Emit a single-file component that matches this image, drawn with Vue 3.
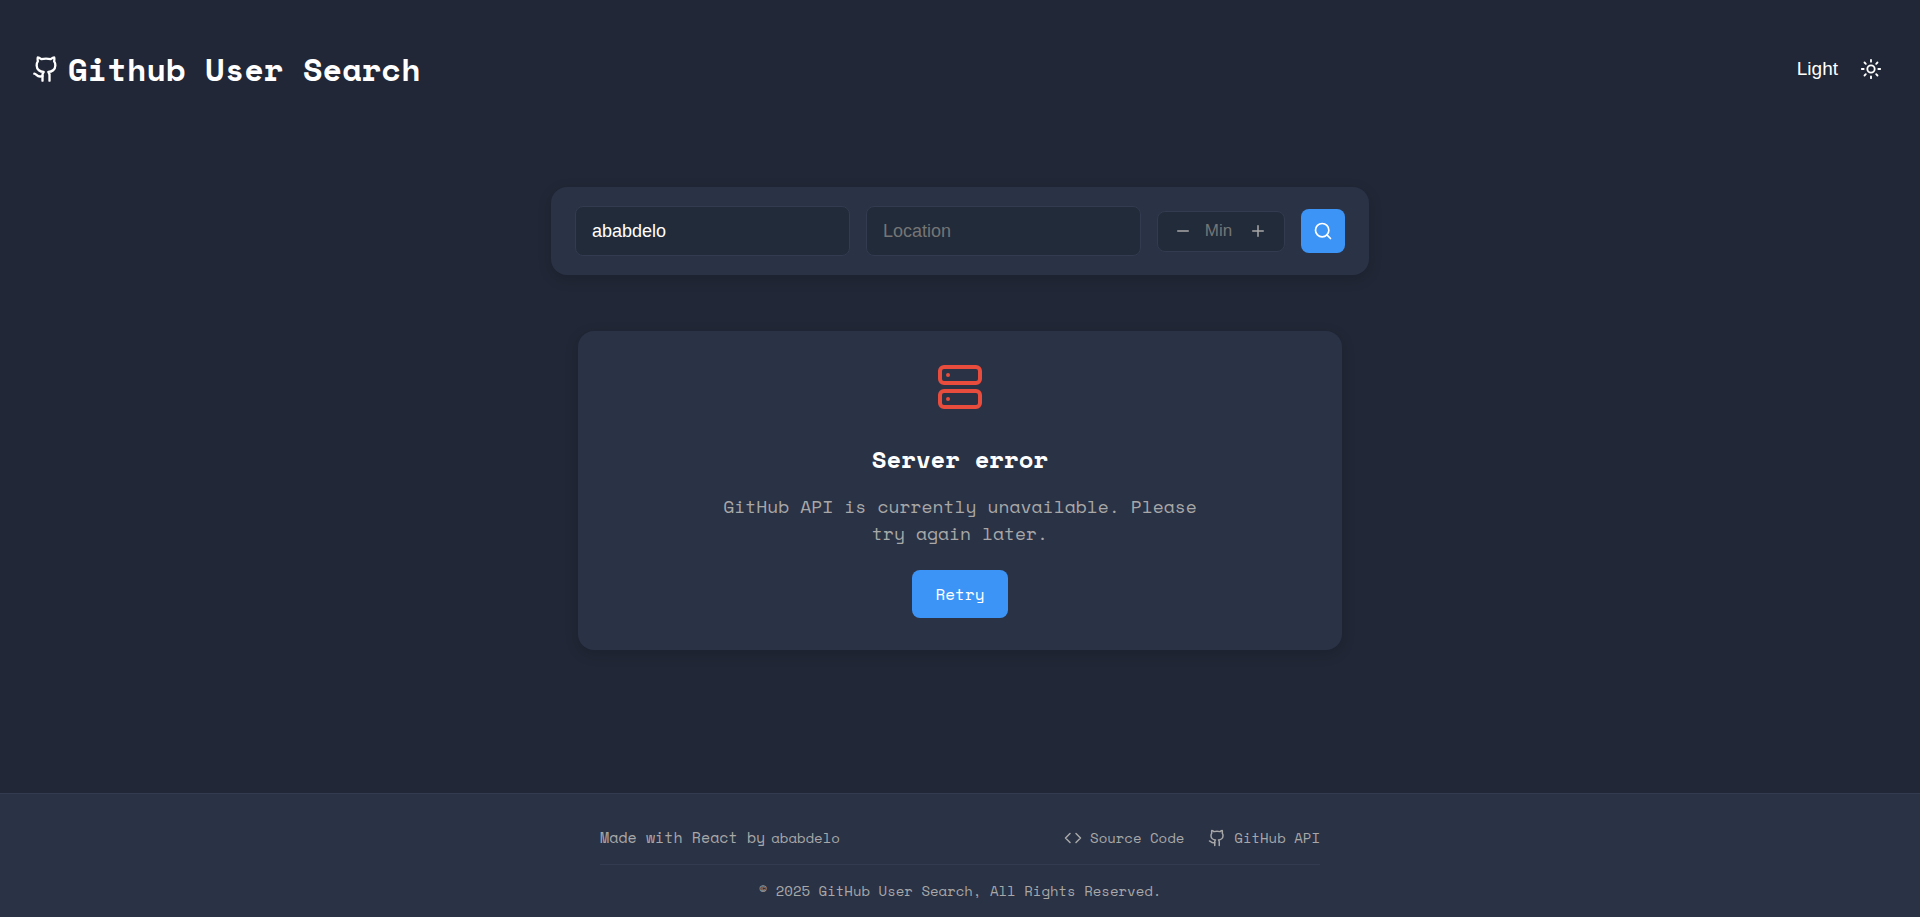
<script setup>
import { ref } from 'vue'

const username = ref('ababdelo')
const location = ref('')
const minRepos = ref('')

function step(delta) {
  minRepos.value = String(Math.max(0, Number(minRepos.value || 0) + delta))
}
</script>

<template>
  <div class="page">
    <header class="header">
      <h1 class="brand">
        <svg class="icon brand-icon" viewBox="0 0 24 24" aria-hidden="true">
          <path d="M15 22v-4a4.8 4.8 0 0 0-1-3.5c3 0 6-2 6-5.5.08-1.25-.27-2.48-1-3.5.28-1.15.28-2.35 0-3.5 0 0-1 0-3 1.5-2.64-.5-5.36-.5-8 0C6 2 5 2 5 2c-.3 1.15-.3 2.35 0 3.5A5.403 5.403 0 0 0 4 9c0 3.5 3 5.5 6 5.5-.39.49-.68 1.05-.85 1.65-.17.6-.22 1.23-.15 1.85v4" />
          <path d="M9 18c-4.51 2-5-2-7-2" />
        </svg>
        <span>Github User Search</span>
      </h1>
      <button class="theme" type="button">
        <span>Light</span>
        <svg class="icon sun" viewBox="0 0 24 24" aria-hidden="true">
          <circle cx="12" cy="12" r="4" />
          <path d="M12 2v2M12 20v2M4.93 4.93l1.41 1.41M17.66 17.66l1.41 1.41M2 12h2M20 12h2M6.34 17.66l-1.41 1.41M19.07 4.93l-1.41 1.41" />
        </svg>
      </button>
    </header>

    <main class="main">
      <form class="search" @submit.prevent>
        <input v-model="username" class="field" type="text" placeholder="Username" aria-label="Username" />
        <input v-model="location" class="field" type="text" placeholder="Location" aria-label="Location" />
        <div class="stepper">
          <button type="button" class="step" aria-label="Decrease minimum" @click="step(-1)">
            <svg class="icon" viewBox="0 0 24 24" aria-hidden="true"><path d="M5 12h14" /></svg>
          </button>
          <input v-model="minRepos" class="amount" type="text" inputmode="numeric" placeholder="Min" aria-label="Minimum repositories" />
          <button type="button" class="step" aria-label="Increase minimum" @click="step(1)">
            <svg class="icon" viewBox="0 0 24 24" aria-hidden="true"><path d="M12 5v14M5 12h14" /></svg>
          </button>
        </div>
        <button type="submit" class="submit" aria-label="Search">
          <svg class="icon" viewBox="0 0 24 24" aria-hidden="true">
            <circle cx="11" cy="11" r="8" /><path d="M21 21l-4.3-4.3" />
          </svg>
        </button>
      </form>

      <section class="error">
        <svg class="icon error-icon" viewBox="0 0 24 24" aria-hidden="true">
          <rect x="2" y="2" width="20" height="8" rx="2" />
          <rect x="2" y="14" width="20" height="8" rx="2" />
          <path d="M6 6h.01M6 18h.01" />
        </svg>
        <h2>Server error</h2>
        <p>GitHub API is currently unavailable. Please try again later.</p>
        <button type="button" class="retry">Retry</button>
      </section>
    </main>

    <footer class="footer">
      <div class="footer-inner">
        <div class="footer-row">
          <div class="credit">
            <span>Made with React by</span>
            <a href="#">ababdelo</a>
          </div>
          <nav class="links">
            <a href="#">
              <svg class="icon" viewBox="0 0 24 24" aria-hidden="true"><path d="M16 18l6-6-6-6M8 6l-6 6 6 6" /></svg>
              <span>Source Code</span>
            </a>
            <a href="#">
              <svg class="icon" viewBox="0 0 24 24" aria-hidden="true">
                <path d="M15 22v-4a4.8 4.8 0 0 0-1-3.5c3 0 6-2 6-5.5.08-1.25-.27-2.48-1-3.5.28-1.15.28-2.35 0-3.5 0 0-1 0-3 1.5-2.64-.5-5.36-.5-8 0C6 2 5 2 5 2c-.3 1.15-.3 2.35 0 3.5A5.403 5.403 0 0 0 4 9c0 3.5 3 5.5 6 5.5-.39.49-.68 1.05-.85 1.65-.17.6-.22 1.23-.15 1.85v4" />
                <path d="M9 18c-4.51 2-5-2-7-2" />
              </svg>
              <span>GitHub API</span>
            </a>
          </nav>
        </div>
        <p class="copyright">© 2025 GitHub User Search, All Rights Reserved.</p>
      </div>
    </footer>
  </div>
</template>

<style>
body {
  background: #212736;
}
</style>

<style scoped>
.page,
.page * {
  box-sizing: border-box;
}

.page {
  min-height: 100vh;
  display: flex;
  flex-direction: column;
  background: #212736;
  color: #fff;
  font-family: "Space Mono", "DejaVu Sans Mono", monospace;
}

h1,
h2,
p {
  margin: 0;
}

button,
input {
  font-family: "Liberation Sans", Arial, sans-serif;
}

button {
  border: 0;
  padding: 0;
  cursor: pointer;
}

a {
  color: inherit;
  text-decoration: none;
}

.icon {
  flex: none;
  display: block;
  fill: none;
  stroke: currentColor;
  stroke-width: 2;
  stroke-linecap: round;
  stroke-linejoin: round;
}

.header {
  display: flex;
  align-items: center;
  justify-content: space-between;
  padding: 45px 32px 47px;
}

.brand {
  display: flex;
  align-items: center;
  gap: 8px;
  font-size: 32px;
  line-height: 48px;
  font-weight: 700;
}

.brand-icon {
  width: 28px;
  height: 28px;
}

.theme {
  display: flex;
  align-items: center;
  gap: 22px;
  padding: 8px 6px;
  background: none;
  color: #fff;
  font-size: 19px;
}

.sun {
  width: 22px;
  height: 22px;
}

.main {
  flex: 1;
  display: flex;
  flex-direction: column;
  align-items: center;
  gap: 56px;
  padding: 47px 24px;
}

.search {
  width: 100%;
  max-width: 818px;
  display: flex;
  align-items: center;
  gap: 16px;
  padding: 19px 24px;
  border-radius: 16px;
  background: #2a3245;
  box-shadow: 0 4px 14px rgba(0, 0, 0, 0.15);
}

.field {
  flex: 1;
  min-width: 0;
  height: 50px;
  padding: 0 16px;
  border: 1px solid #323b4f;
  border-radius: 8px;
  background: #222b39;
  color: #fff;
  font-size: 18px;
  outline: 0;
}

.field::placeholder,
.amount::placeholder {
  color: #757575;
  opacity: 1;
}

.stepper {
  width: 128px;
  height: 41px;
  display: flex;
  align-items: center;
  padding: 0 17px 0 16px;
  border: 1px solid #323b4f;
  border-radius: 8px;
  background: #222b39;
}

.step {
  flex: none;
  background: none;
  color: #a8a8a8;
}

.step .icon {
  width: 18px;
  height: 18px;
}

.amount {
  flex: 1;
  min-width: 0;
  padding: 0 4px 0 0;
  border: 0;
  background: none;
  color: #fff;
  font-size: 17px;
  text-align: center;
  outline: 0;
}

.submit {
  width: 44px;
  height: 44px;
  display: grid;
  place-items: center;
  border-radius: 8px;
  background: #3d94f7;
  color: #fff;
}

.submit .icon {
  width: 20px;
  height: 20px;
}

.error {
  width: 100%;
  max-width: 764px;
  display: flex;
  flex-direction: column;
  align-items: center;
  padding: 32px;
  border-radius: 16px;
  background: #2a3245;
  box-shadow: 0 4px 14px rgba(0, 0, 0, 0.15);
  text-align: center;
}

.error-icon {
  width: 48px;
  height: 48px;
  color: #e74c3c;
}

.error h2 {
  margin-top: 30px;
  font-size: 24px;
  line-height: 36px;
}

.error p {
  max-width: 500px;
  margin: 16px 0 23px;
  color: #a8a8a8;
  font-size: 18px;
  line-height: 27px;
}

.retry {
  height: 48px;
  padding: 0 24px;
  border-radius: 8px;
  background: #3d94f7;
  color: #fff;
  font-family: "Space Mono", "DejaVu Sans Mono", monospace;
  font-size: 16px;
}

.footer {
  padding: 31px 24px 15px;
  border-top: 1px solid #323b50;
  background: #2a3245;
  color: #a8a8a8;
}

.footer-inner {
  max-width: 720px;
  margin: 0 auto;
}

.footer-row {
  display: flex;
  align-items: center;
  justify-content: space-between;
  padding-bottom: 14px;
  border-bottom: 1px solid #323b50;
  font-size: 14px;
  line-height: 24px;
}

.credit {
  display: flex;
  align-items: baseline;
  gap: 6px;
}

.credit span {
  font-size: 15px;
}

.links {
  display: flex;
  gap: 24px;
}

.links a {
  display: flex;
  align-items: center;
  gap: 8px;
}

.links .icon {
  width: 18px;
  height: 18px;
}

.copyright {
  padding-top: 15px;
  font-size: 14px;
  line-height: 22px;
  text-align: center;
}
</style>
